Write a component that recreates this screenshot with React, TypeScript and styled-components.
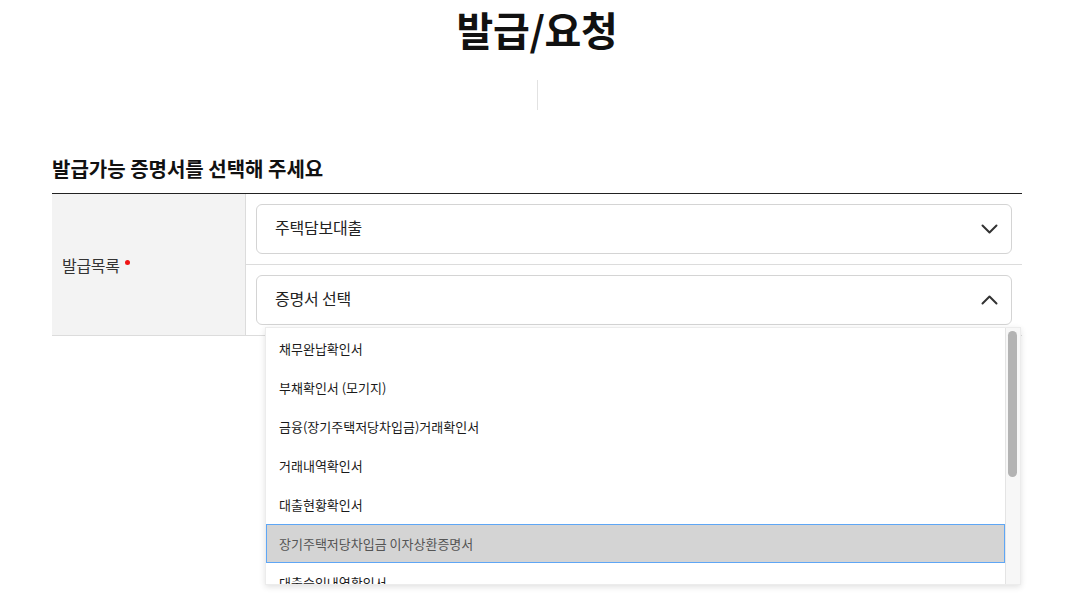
import React from 'react'
import styled, {createGlobalStyle} from 'styled-components'

const GlobalStyle = createGlobalStyle`
  * {
    box-sizing: border-box;
  }

  html, body {
    margin: 0;
    min-height: 100%;
    background: #fff;
  }

  body {
    color: #111;
    font-family: "Noto Sans CJK KR", "Noto Sans", sans-serif;
  }
`

const certificates = [
    '채무완납확인서',
    '부채확인서 (모기지)',
    '금융(장기주택저당차입금)거래확인서',
    '거래내역확인서',
    '대출현황확인서',
    '장기주택저당차입금 이자상환증명서',
    '대출승인내역확인서',
    '중도상환수수료확인서',
    '대출잔액증명서',
    '이자납입증명서',
    '상환내역확인서',
]

const Chevron = ({up}: { up?: boolean }) => (
    <svg width="17" height="10" viewBox="0 0 17 10" fill="none">
        <path
            d={up ? 'M1.5 8.5 L8.5 1.5 L15.5 8.5' : 'M1.5 1.5 L8.5 8.5 L15.5 1.5'}
            stroke="#333"
            strokeWidth="2"
            strokeLinecap="round"
            strokeLinejoin="round"
        />
    </svg>
)

export default function App() {
    return (
        <Page>
            <GlobalStyle/>
            <Title>발급/요청</Title>
            <Divider/>
            <SectionTitle>발급가능 증명서를 선택해 주세요</SectionTitle>
            <FormTable>
                <LabelCell>
                    <Label>발급목록</Label>
                    <Required/>
                </LabelCell>
                <FieldCell>
                    <FieldRow>
                        <Select>
                            <span>주택담보대출</span>
                            <Chevron/>
                        </Select>
                    </FieldRow>
                    <FieldRow>
                        <Select>
                            <span>증명서 선택</span>
                            <Chevron up/>
                            <Dropdown>
                                <OptionList>
                                    {certificates.map((name, i) => (
                                        <Option key={name} $active={i === 5}>{name}</Option>
                                    ))}
                                </OptionList>
                                <ScrollTrack>
                                    <ScrollThumb/>
                                </ScrollTrack>
                            </Dropdown>
                        </Select>
                    </FieldRow>
                </FieldCell>
            </FormTable>
        </Page>
    )
}

const Page = styled.div`
  width: 970px;
  min-height: 606px;
  margin: 0 auto;
  display: flex;
  flex-direction: column;
`

const Title = styled.h1`
  margin: 0;
  padding-top: 5px;
  text-align: center;
  font-size: 40px;
  line-height: 48px;
  font-weight: 700;
  letter-spacing: -0.3px;
  color: #111;
`

const Divider = styled.div`
  align-self: center;
  width: 1px;
  height: 30px;
  margin-top: 27px;
  background: #e2e2e2;
`

const SectionTitle = styled.h2`
  margin: 46px 0 11px;
  font-size: 20px;
  line-height: 26px;
  font-weight: 700;
  letter-spacing: 0;
  color: #111;
`

const FormTable = styled.div`
  display: grid;
  grid-template-columns: 194px 1fr;
  border-top: 1px solid #222;
  border-bottom: 1px solid #dcdcdc;
`

const LabelCell = styled.div`
  display: flex;
  align-items: center;
  gap: 5px;
  padding-left: 10px;
  background: #f3f3f3;
  border-right: 1px solid #dcdcdc;
`

const Label = styled.span`
  font-size: 16px;
  color: #333;
  letter-spacing: -0.3px;
`

const Required = styled.i`
  width: 5px;
  height: 5px;
  margin-top: -4px;
  border-radius: 50%;
  background: #f01414;
`

const FieldCell = styled.div`
  display: flex;
  flex-direction: column;
`

const FieldRow = styled.div`
  padding: 10px;

  & + & {
    border-top: 1px solid #dcdcdc;
  }
`

const Select = styled.div`
  position: relative;
  height: 50px;
  display: flex;
  align-items: center;
  justify-content: space-between;
  padding: 0 13px 0 18px;
  border: 1px solid #d4d4d4;
  border-radius: 6px;
  background: #fff;
  font-size: 16px;
  color: #222;
  letter-spacing: -0.2px;

  & > span {
    margin-top: -5px;
  }
`

const Dropdown = styled.div`
  position: absolute;
  top: calc(100% + 3px);
  left: 8px;
  width: 756px;
  height: 258px;
  display: flex;
  background: #fff;
  border: 1px solid #ececec;
  box-shadow: 0 2px 6px rgba(0, 0, 0, 0.12);
  z-index: 10;
`

const OptionList = styled.ul`
  flex: 1;
  margin: 0;
  padding: 1px 0 0;
  list-style: none;
  overflow: hidden;
`

const Option = styled.li<{ $active?: boolean }>`
  height: 39px;
  display: flex;
  align-items: center;
  padding-left: 12px;
  font-size: 13px;
  letter-spacing: 0;
  color: ${({$active}) => ($active ? '#555' : '#1a1a1a')};
  background: ${({$active}) => ($active ? '#d4d4d4' : 'transparent')};
  border: 1px solid ${({$active}) => ($active ? '#5ea6f5' : 'transparent')};
`

const ScrollTrack = styled.div`
  width: 15px;
  flex-shrink: 0;
  padding: 3px 3px 0 2px;
  background: #f7f7f7;
  border-left: 1px solid #e4e4e4;
`

const ScrollThumb = styled.div`
  height: 146px;
  border-radius: 5px;
  background: #b3b3b3;
`
